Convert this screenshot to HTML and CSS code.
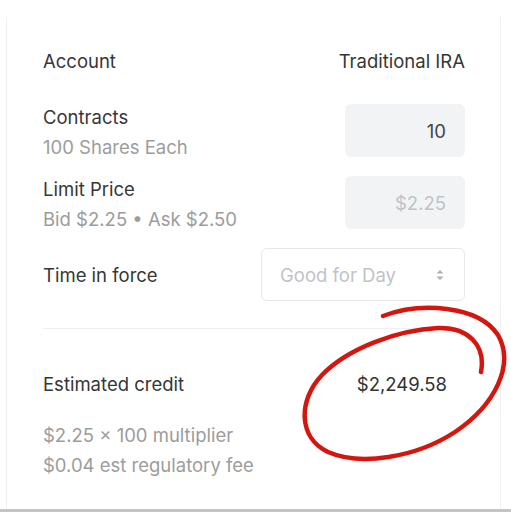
FILE: index.html
```html
<!DOCTYPE html>
<html lang="en">
<head>
    <meta charset="UTF-8">
    <meta name="viewport" content="width=device-width, initial-scale=1.0">
    <title>Order ticket</title>
    <link rel="stylesheet" href="styles.css">
</head>
<body>
    <div class="page">
        <div class="ticket">
            <div class="row row-account">
                <span class="label">Account</span>
                <span class="value">Traditional IRA</span>
            </div>
            <div class="row">
                <div class="label-block">
                    <div class="label">Contracts</div>
                    <div class="hint">100 Shares Each</div>
                </div>
                <div class="field">10</div>
            </div>
            <div class="row">
                <div class="label-block">
                    <div class="label">Limit Price</div>
                    <div class="hint">Bid $2.25 &bull; Ask $2.50</div>
                </div>
                <div class="field placeholder">$2.25</div>
            </div>
            <div class="row">
                <span class="label">Time in force</span>
                <div class="select">
                    <span>Good for Day</span>
                    <svg width="10" height="14" viewBox="0 0 10 14">
                        <path d="M1.5 5.5 L5 2 L8.5 5.5 Z M1.5 8.5 L5 12 L8.5 8.5 Z" fill="#aeb2b8"/>
                    </svg>
                </div>
            </div>

            <div class="divider"></div>

            <div class="summary">
                <div class="row-credit">
                    <span class="label">Estimated credit</span>
                    <span class="credit">$2,249.58</span>
                    <!-- hand drawn circle over the total -->
                    <svg class="scribble" width="511" height="512" viewBox="0 0 511 512">
                        <path d="M383,316 C420,302 478,305 498,335 C515,365 495,405 455,432 C415,458 360,466 328,452 C298,438 298,400 322,375 C348,348 398,330 438,328 C468,327 486,345 481,372"
                              fill="none" stroke="#d5160f" stroke-width="4.5" stroke-linecap="round"/>
                    </svg>
                </div>
                <div class="hint">$2.25 &times; 100 multiplier</div>
                <div class="hint">$0.04 est regulatory fee</div>
            </div>
        </div>
    </div>
</body>
</html>
```

FILE: styles.css
```css
body {
    margin: 0;
    background-color: #c4c4c4;
    font-family: 'Inter', 'Noto Sans', sans-serif;
    color: #363636;
}

.page {
    background-color: #fff;
    height: 509px;
    padding-top: 17px;
    box-sizing: border-box;
    position: relative;
}

.ticket {
    margin: 0 10px 0 6px;
    height: 492px;
    border-left: 1px solid #eef0f4;
    border-right: 1px solid #eef0f4;
    padding: 17px 35px 0 36px;
    box-sizing: border-box;
}

.row {
    display: flex;
    align-items: center;
    justify-content: space-between;
    height: 53px;
    margin-bottom: 19px;
}

.row-account {
    height: 53px;
    margin-bottom: 17px;
}

.label {
    font-size: 18.5px;
    line-height: 30px;
    color: #363636;
}

.value {
    font-size: 18.5px;
    color: #363636;
}

.hint {
    font-size: 18.5px;
    line-height: 30px;
    color: #9c9c9c;
}

.label-block {
    padding-top: 3px;
}

.field {
    width: 120px;
    height: 53px;
    box-sizing: border-box;
    background-color: #f2f3f5;
    border-radius: 6px;
    padding-right: 19px;
    display: flex;
    align-items: center;
    justify-content: flex-end;
    font-size: 18.5px;
    color: #444;
}

.field.placeholder {
    color: #bfc3c8;
}

.select {
    width: 204px;
    height: 53px;
    box-sizing: border-box;
    border: 1px solid #e6e8eb;
    border-radius: 6px;
    padding: 0 19px 0 18px;
    display: flex;
    align-items: center;
    justify-content: space-between;
    font-size: 18.5px;
    color: #bfc3c8;
}

.divider {
    height: 1px;
    background-color: #eeeff1;
    margin-top: 27px;
}

.summary {
    padding-top: 40px;
}

.row-credit {
    display: flex;
    justify-content: space-between;
    align-items: center;
    margin-bottom: 21px;
}

.credit {
    font-size: 18.5px;
    color: #333;
    margin-right: 18px;
}

.scribble {
    position: absolute;
    left: 0;
    top: 0;
    pointer-events: none;
}

.summary .hint {
    line-height: 30px;
}
```
